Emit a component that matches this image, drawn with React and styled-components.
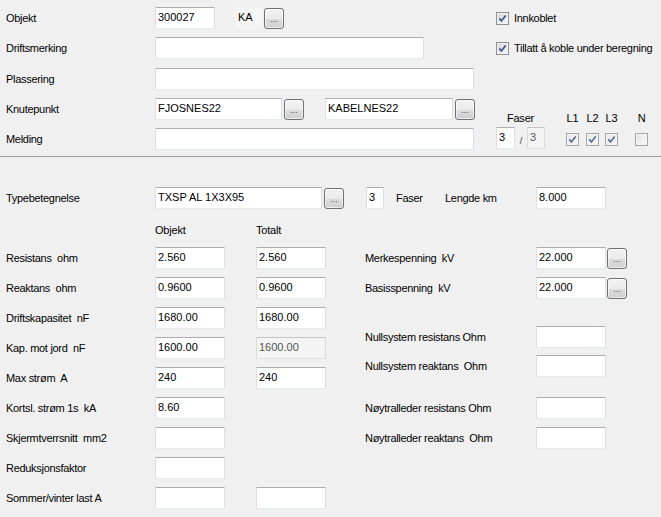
import React from 'react';
import styled, { createGlobalStyle } from 'styled-components';

const GlobalStyle = createGlobalStyle`
  html, body {
    margin: 0;
    background: #f0f0f0;
  }
  body {
    font-family: "Liberation Sans", Arial, sans-serif;
    font-size: 11px;
    color: #000;
  }
`;

const Check = ({ checked, disabled }) => (
  <CheckBox $disabled={disabled}>
    {checked && (
      <svg width="9" height="9" viewBox="0 0 9 9">
        <polyline
          points="1.3,4.4 3.4,7 7.7,1.4"
          fill="none"
          stroke={disabled ? '#5c6f97' : '#3d5283'}
          strokeWidth="1.7"
        />
      </svg>
    )}
  </CheckBox>
);

const Dots = ({ ml }) => <DotButton $ml={ml}>...</DotButton>;

const App = () => (
  <Window>
    <GlobalStyle />
    <TopSection>
      <Label style={{ gridRow: 1 }}>Objekt</Label>
      <FieldRow style={{ gridRow: 1 }}>
        <TextBox $w={60}>300027</TextBox>
        <PlainBox $w={28} $ml={20}>KA</PlainBox>
        <Dots ml={1} />
      </FieldRow>
      <CheckLine style={{ gridRow: 1 }}>
        <Check checked />
        <span>Innkoblet</span>
      </CheckLine>

      <Label style={{ gridRow: 2 }}>Driftsmerking</Label>
      <FieldRow style={{ gridRow: 2 }}>
        <TextBox $w={269} />
      </FieldRow>
      <CheckLine style={{ gridRow: 2 }}>
        <Check checked />
        <span>Tillatt å koble under beregning</span>
      </CheckLine>

      <Label style={{ gridRow: 3 }}>Plassering</Label>
      <FieldRow style={{ gridRow: 3 }}>
        <TextBox $w={319} />
      </FieldRow>

      <Label style={{ gridRow: 4 }}>Knutepunkt</Label>
      <FieldRow style={{ gridRow: 4 }}>
        <TextBox $w={127}>FJOSNES22</TextBox>
        <Dots ml={2} />
        <TextBox $w={128} $ml={21}>KABELNES22</TextBox>
        <Dots ml={2} />
      </FieldRow>

      <Label style={{ gridRow: 5 }}>Melding</Label>
      <FieldRow style={{ gridRow: 5 }}>
        <TextBox $w={319} />
      </FieldRow>

      <PhaseGroup>
        <PhaseCol>
          <ColHead>Faser</ColHead>
          <PhaseBoxes>
            <TextBox $w={19}>3</TextBox>
            <Slash>/</Slash>
            <TextBox $w={18} disabled>3</TextBox>
          </PhaseBoxes>
        </PhaseCol>
        <PhaseCol $ml={21}>
          <ColHead>L1</ColHead>
          <CheckSlot><Check checked disabled /></CheckSlot>
        </PhaseCol>
        <PhaseCol $ml={7}>
          <ColHead>L2</ColHead>
          <CheckSlot><Check checked disabled /></CheckSlot>
        </PhaseCol>
        <PhaseCol $ml={6}>
          <ColHead>L3</ColHead>
          <CheckSlot><Check checked disabled /></CheckSlot>
        </PhaseCol>
        <PhaseCol $ml={17}>
          <ColHead>N</ColHead>
          <CheckSlot><Check disabled /></CheckSlot>
        </PhaseCol>
      </PhaseGroup>
    </TopSection>

    <BottomSection>
      <TypeRow>
        <Label $w={149}>Typebetegnelse</Label>
        <TextBox $w={167}>TXSP AL 1X3X95</TextBox>
        <Dots ml={2} />
        <TextBox $w={18} $ml={22}>3</TextBox>
        <Label $w={49} $ml={12}>Faser</Label>
        <Label $w={91}>Lengde km</Label>
        <TextBox $w={70}>8.000</TextBox>
      </TypeRow>

      <Columns>
        <ValueGrid>
          <span />
          <ColHead $pt={4}>Objekt</ColHead>
          <ColHead $pt={4}>Totalt</ColHead>

          <Label>Resistans  ohm</Label>
          <TextBox $w={70}>2.560</TextBox>
          <TextBox $w={70}>2.560</TextBox>

          <Label>Reaktans  ohm</Label>
          <TextBox $w={70}>0.9600</TextBox>
          <TextBox $w={70}>0.9600</TextBox>

          <Label>Driftskapasitet  nF</Label>
          <TextBox $w={70}>1680.00</TextBox>
          <TextBox $w={70}>1680.00</TextBox>

          <Label>Kap. mot jord  nF</Label>
          <TextBox $w={70}>1600.00</TextBox>
          <TextBox $w={70} disabled>1600.00</TextBox>

          <Label>Max strøm  A</Label>
          <TextBox $w={70}>240</TextBox>
          <TextBox $w={70}>240</TextBox>

          <Label>Kortsl. strøm 1s  kA</Label>
          <TextBox $w={70}>8.60</TextBox>
          <span />

          <Label>Skjermtverrsnitt  mm2</Label>
          <TextBox $w={70} />
          <span />

          <Label>Reduksjonsfaktor</Label>
          <TextBox $w={70} />
          <span />

          <Label>Sommer/vinter last A</Label>
          <TextBox $w={70} />
          <TextBox $w={70} />
        </ValueGrid>

        <RightCol>
          <RowGroup>
            <RightRow>
              <Label $w={171}>Merkespenning  kV</Label>
              <TextBox $w={70}>22.000</TextBox>
              <Dots ml={1} />
            </RightRow>
            <RightRow>
              <Label $w={171}>Basisspenning  kV</Label>
              <TextBox $w={70}>22.000</TextBox>
              <Dots ml={1} />
            </RightRow>
          </RowGroup>
          <RowGroup $gap={7} $mt={27}>
            <RightRow>
              <Label $w={171}>Nullsystem resistans Ohm</Label>
              <TextBox $w={70} />
            </RightRow>
            <RightRow>
              <Label $w={171}>Nullsystem reaktans  Ohm</Label>
              <TextBox $w={70} />
            </RightRow>
          </RowGroup>
          <RowGroup $mt={20}>
            <RightRow>
              <Label $w={171}>Nøytralleder resistans Ohm</Label>
              <TextBox $w={70} />
            </RightRow>
            <RightRow>
              <Label $w={171}>Nøytralleder reaktans  Ohm</Label>
              <TextBox $w={70} />
            </RightRow>
          </RowGroup>
        </RightCol>
      </Columns>
    </BottomSection>
  </Window>
);

export default App;

// Styled Components
const Window = styled.div`
  width: 661px;
  height: 517px;
  overflow: hidden;
  background: #f0f0f0;
`;

const TopSection = styled.div`
  display: grid;
  grid-template-columns: 149px 341px 1fr;
  grid-template-rows: 22px 22px 23px 22px 22px;
  row-gap: 8px;
  padding: 7px 0 6px 6px;
  border-bottom: 1px solid #a0a0a0;
`;

const Label = styled.div`
  display: flex;
  align-items: center;
  white-space: pre;
  letter-spacing: -0.3px;
  width: ${(p) => (p.$w ? `${p.$w}px` : 'auto')};
  margin-left: ${(p) => p.$ml || 0}px;
  flex-shrink: 0;
  grid-column: 1;
`;

const FieldRow = styled.div`
  grid-column: 2;
  display: flex;
  align-items: center;
`;

const TextBox = styled.div`
  box-sizing: border-box;
  flex-shrink: 0;
  width: ${(p) => p.$w}px;
  height: 22px;
  margin-left: ${(p) => p.$ml || 0}px;
  padding: 3px 2px 0;
  line-height: 13px;
  white-space: nowrap;
  overflow: hidden;
  background: ${(p) => (p.disabled ? '#f4f4f4' : '#ffffff')};
  color: ${(p) => (p.disabled ? '#555555' : '#000000')};
  border: 1px solid ${(p) => (p.disabled ? '#dadada' : '#dbdfe6')};
  border-top-color: ${(p) => (p.disabled ? '#c4c4c4' : '#abadb3')};
  border-bottom-color: ${(p) => (p.disabled ? '#e2e2e2' : '#e3e9ef')};
  border-radius: 1px;
`;

const PlainBox = styled(TextBox)`
  background: #f5f5f5;
  border-color: #f2f2f2;
`;

const DotButton = styled.div`
  box-sizing: border-box;
  flex-shrink: 0;
  width: 20px;
  height: 21px;
  margin-left: ${(p) => p.$ml || 0}px;
  display: flex;
  align-items: flex-end;
  justify-content: center;
  padding-bottom: 4px;
  font-size: 9px;
  line-height: 9px;
  color: #4a4a4a;
  border: 1px solid #707070;
  border-radius: 3px;
  background: linear-gradient(#f2f2f2 0%, #ebebeb 50%, #dddddd 51%, #cfcfcf 100%);
  box-shadow: inset 0 0 0 1px rgba(255, 255, 255, 0.6);
`;

const CheckLine = styled.div`
  grid-column: 3;
  display: flex;
  align-items: center;
  gap: 5px;
  white-space: nowrap;
  letter-spacing: -0.3px;
`;

const CheckBox = styled.span`
  box-sizing: border-box;
  flex-shrink: 0;
  width: 13px;
  height: 13px;
  display: inline-flex;
  align-items: center;
  justify-content: center;
  border: 1px solid ${(p) => (p.$disabled ? '#a4a6a8' : '#8e8f8f')};
  background: ${(p) =>
    p.$disabled
      ? 'linear-gradient(135deg, #e4e4e4, #f9f9f9)'
      : 'linear-gradient(135deg, #d3d6dc, #f7f7f7)'};
  box-shadow: inset 0 0 0 1px #f4f4f4;
`;

const PhaseGroup = styled.div`
  grid-column: 3;
  grid-row: 4 / 6;
  align-self: end;
  display: flex;
  align-items: flex-start;
  margin-bottom: 1px;
`;

const PhaseCol = styled.div`
  display: flex;
  flex-direction: column;
  align-items: center;
  margin-left: ${(p) => p.$ml || 0}px;
`;

const ColHead = styled.div`
  line-height: 12px;
  height: ${(p) => (p.$pt ? 'auto' : '12px')};
  padding-top: ${(p) => p.$pt || 0}px;
  letter-spacing: -0.2px;
  white-space: nowrap;
  display: flex;
  align-items: center;
`;

const PhaseBoxes = styled.div`
  display: flex;
  align-items: center;
  margin-top: 3px;
`;

const Slash = styled.span`
  width: 12px;
  text-align: center;
  font-size: 9px;
  padding-top: 6px;
  color: #333;
`;

const CheckSlot = styled.div`
  margin-top: 9px;
  display: flex;
`;

const BottomSection = styled.div`
  padding: 30px 0 0 6px;
`;

const TypeRow = styled.div`
  display: flex;
  align-items: center;
  height: 22px;
`;

const Columns = styled.div`
  display: flex;
  margin-top: 8px;
`;

const ValueGrid = styled.div`
  display: grid;
  grid-template-columns: 149px 101px 70px;
  grid-auto-rows: 22px;
  row-gap: 8px;
`;

const RightCol = styled.div`
  display: flex;
  flex-direction: column;
  margin-left: 39px;
  padding-top: 30px;
`;

const RowGroup = styled.div`
  display: flex;
  flex-direction: column;
  gap: ${(p) => p.$gap || 8}px;
  margin-top: ${(p) => p.$mt || 0}px;
`;

const RightRow = styled.div`
  display: flex;
  align-items: center;
  height: 22px;
`;
